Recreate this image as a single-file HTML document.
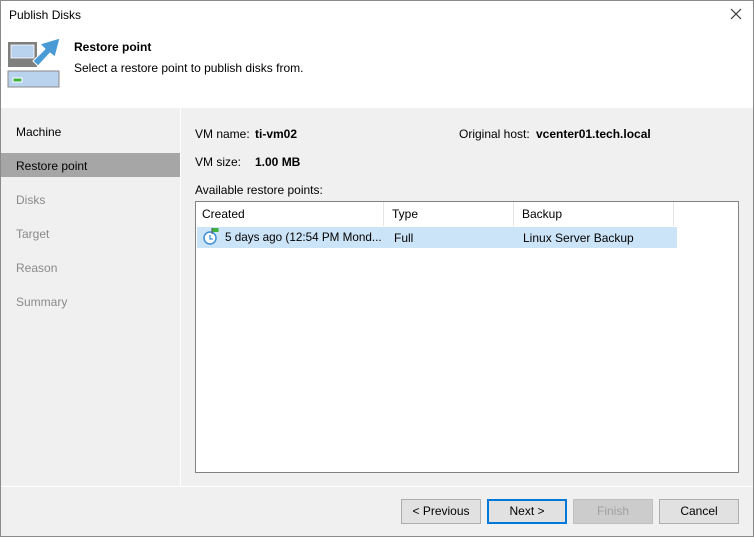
<html><head><style>
body{margin:0;width:754px;height:537px;overflow:hidden;font-family:"Liberation Sans",sans-serif;font-size:12px;color:#000}
.win{position:absolute;left:0;top:0;width:752px;height:535px;border:1px solid #8a8a8a;background:#f0f0f0}
.a{position:absolute}
.nav{position:absolute;left:15px;font-size:12px;color:#8a8a8a}
.btn{position:absolute;top:498px;width:78px;height:23px;border:1px solid #adadad;background:#e1e1e1;text-align:center;line-height:23px;font-size:12px}
</style></head><body><div class="win">
<div class="a" style="left:0;top:0;width:752px;height:107px;background:#fff"></div>
<div class="a" style="left:8px;top:7px">Publish Disks</div>
<svg class="a" style="left:729px;top:7px" width="12" height="12"><path d="M1 1L11 11M11 1L1 11" stroke="#333" stroke-width="1.2"/></svg>
<svg class="a" style="left:6px;top:36px" width="54" height="52">
<rect x="1" y="5" width="29" height="25" fill="#7f7f7f"/>
<rect x="4" y="8" width="23" height="13" fill="#b9d3ee" stroke="#fff" stroke-width="0.8"/>
<rect x="1" y="34" width="51" height="16" fill="#b9d3ee" stroke="#8a8a8a"/>
<rect x="6" y="41" width="9" height="4" fill="#3fb13f" stroke="#fff"/>
<polygon points="26,24 38,12 33,7 53,1 48,20 43,16 31,29" fill="#4a9bd5" stroke="#fff" stroke-width="1"/>
</svg>
<div class="a" style="left:73px;top:39px;font-weight:bold">Restore point</div>
<div class="a" style="left:73px;top:60px">Select a restore point to publish disks from.</div>
<div class="a" style="left:179px;top:107px;width:1px;height:378px;background:#fff"></div>
<div class="a" style="left:0;top:152px;width:179px;height:24px;background:#a6a6a6"></div>
<div class="nav" style="top:124px;color:#000">Machine</div>
<div class="nav" style="top:158px;color:#000">Restore point</div>
<div class="nav" style="top:192px">Disks</div>
<div class="nav" style="top:226px">Target</div>
<div class="nav" style="top:260px">Reason</div>
<div class="nav" style="top:294px">Summary</div>
<div class="a" style="left:194px;top:126px">VM name:</div>
<div class="a" style="left:254px;top:126px;font-weight:bold">ti-vm02</div>
<div class="a" style="left:458px;top:126px">Original host:</div>
<div class="a" style="left:535px;top:126px;font-weight:bold">vcenter01.tech.local</div>
<div class="a" style="left:194px;top:154px">VM size:</div>
<div class="a" style="left:254px;top:154px;font-weight:bold">1.00 MB</div>
<div class="a" style="left:194px;top:182px">Available restore points:</div>
<div class="a" style="left:194px;top:200px;width:542px;height:270px;background:#fff;border:1px solid #828282"></div>
<div class="a" style="left:382px;top:201px;width:1px;height:24px;background:#e5e5e5"></div>
<div class="a" style="left:512px;top:201px;width:1px;height:24px;background:#e5e5e5"></div>
<div class="a" style="left:672px;top:201px;width:1px;height:24px;background:#e5e5e5"></div>
<div class="a" style="left:201px;top:206px">Created</div>
<div class="a" style="left:391px;top:206px">Type</div>
<div class="a" style="left:521px;top:206px">Backup</div>
<div class="a" style="left:196px;top:226px;width:480px;height:21px;background:#cce4f7"></div>
<svg class="a" style="left:201px;top:226px" width="20" height="20"><circle cx="8" cy="11" r="6" fill="#fff" stroke="#3b8fd6" stroke-width="1.5"/><path d="M8 8v4h3" stroke="#3b8fd6" stroke-width="1.3" fill="none"/><path d="M10 1v6" stroke="#555"/><path d="M10.5 1h6v4h-6z" fill="#3fb13f"/></svg>
<div class="a" style="left:224px;top:230px;font-size:11.7px">5 days ago (12:54 PM Mond...</div>
<div class="a" style="left:393px;top:230px">Full</div>
<div class="a" style="left:522px;top:230px">Linux Server Backup</div>
<div class="a" style="left:0;top:485px;width:752px;height:1px;background:#fff"></div>
<div class="btn" style="left:400px">&lt; Previous</div>
<div class="btn" style="left:486px;border:2px solid #0078d7;width:76px;height:21px;line-height:21px">Next &gt;</div>
<div class="btn" style="left:572px;background:#ccc;border-color:#bfbfbf;color:#a0a0a0">Finish</div>
<div class="btn" style="left:658px">Cancel</div>
</div></body></html>
